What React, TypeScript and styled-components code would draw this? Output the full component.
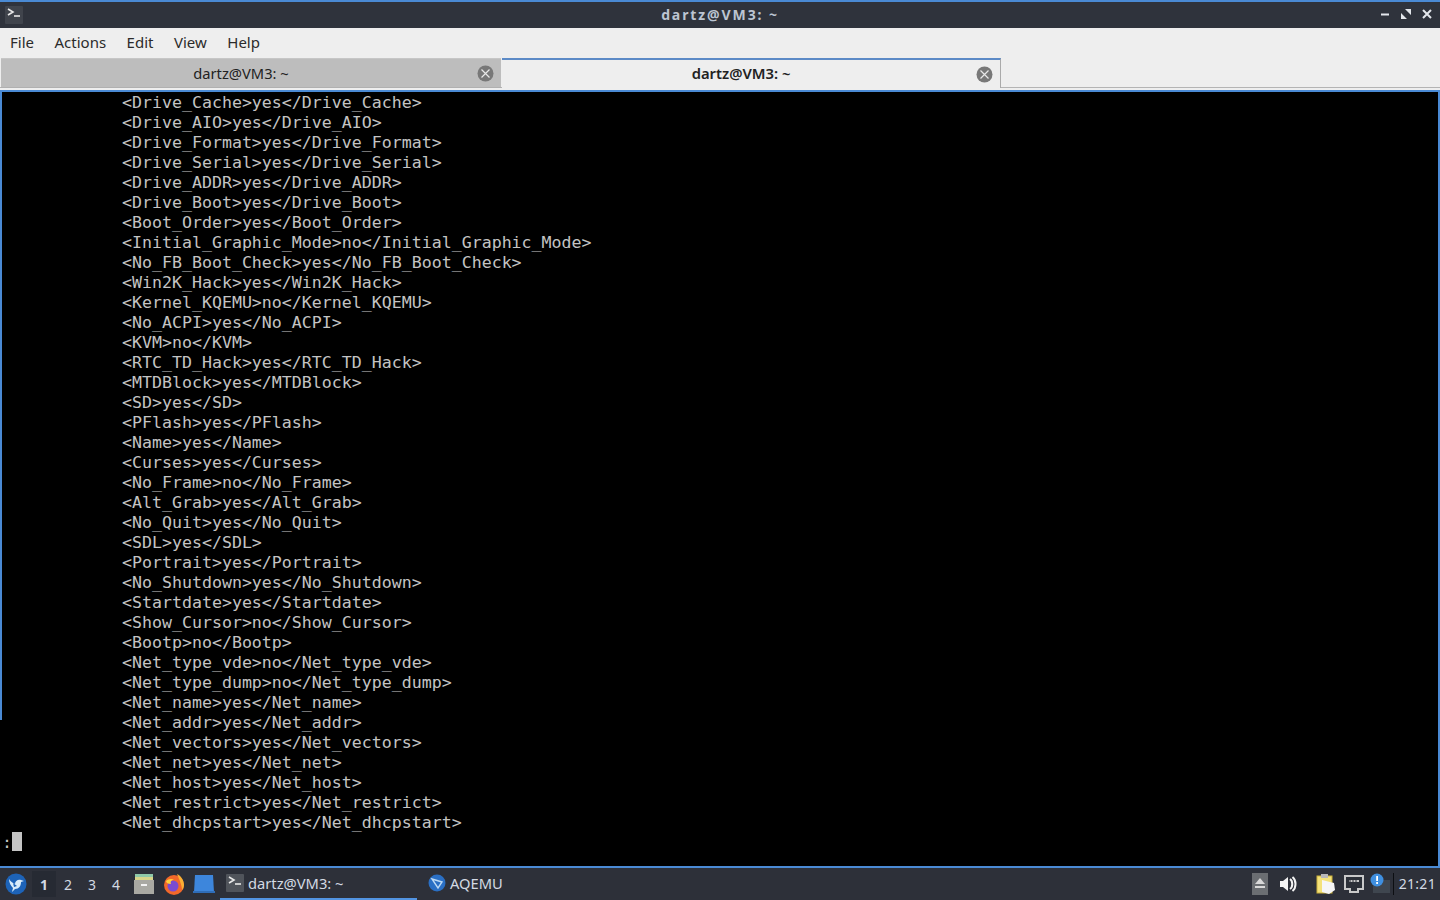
import styled, { createGlobalStyle } from "styled-components";

const lines = [
  "<Drive_Cache>yes</Drive_Cache>",
  "<Drive_AIO>yes</Drive_AIO>",
  "<Drive_Format>yes</Drive_Format>",
  "<Drive_Serial>yes</Drive_Serial>",
  "<Drive_ADDR>yes</Drive_ADDR>",
  "<Drive_Boot>yes</Drive_Boot>",
  "<Boot_Order>yes</Boot_Order>",
  "<Initial_Graphic_Mode>no</Initial_Graphic_Mode>",
  "<No_FB_Boot_Check>yes</No_FB_Boot_Check>",
  "<Win2K_Hack>yes</Win2K_Hack>",
  "<Kernel_KQEMU>no</Kernel_KQEMU>",
  "<No_ACPI>yes</No_ACPI>",
  "<KVM>no</KVM>",
  "<RTC_TD_Hack>yes</RTC_TD_Hack>",
  "<MTDBlock>yes</MTDBlock>",
  "<SD>yes</SD>",
  "<PFlash>yes</PFlash>",
  "<Name>yes</Name>",
  "<Curses>yes</Curses>",
  "<No_Frame>no</No_Frame>",
  "<Alt_Grab>yes</Alt_Grab>",
  "<No_Quit>yes</No_Quit>",
  "<SDL>yes</SDL>",
  "<Portrait>yes</Portrait>",
  "<No_Shutdown>yes</No_Shutdown>",
  "<Startdate>yes</Startdate>",
  "<Show_Cursor>no</Show_Cursor>",
  "<Bootp>no</Bootp>",
  "<Net_type_vde>no</Net_type_vde>",
  "<Net_type_dump>no</Net_type_dump>",
  "<Net_name>yes</Net_name>",
  "<Net_addr>yes</Net_addr>",
  "<Net_vectors>yes</Net_vectors>",
  "<Net_net>yes</Net_net>",
  "<Net_host>yes</Net_host>",
  "<Net_restrict>yes</Net_restrict>",
  "<Net_dhcpstart>yes</Net_dhcpstart>",
];

const GlobalStyle = createGlobalStyle`
  html, body {
    margin: 0;
    padding: 0;
    background: #000;
  }
`;

const Screen = styled.div`
  width: 1440px;
  height: 900px;
  display: flex;
  flex-direction: column;
  overflow: hidden;
  font-family: "Noto Sans", sans-serif;
`;

const TitleBar = styled.div`
  height: 28px;
  box-sizing: border-box;
  flex: none;
  display: flex;
  align-items: center;
  justify-content: space-between;
  padding: 0 5px;
  background: #2f333c;
  border-top: 2px solid #4a8ad4;
  position: relative;
`;

const WindowTitle = styled.div`
  position: absolute;
  left: 0;
  right: 0;
  top: 3px;
  text-align: center;
  color: #bcc5d2;
  font-size: 14px;
  font-weight: 700;
  line-height: 20px;
  letter-spacing: 1.9px;
`;

const WindowButtons = styled.div`
  display: flex;
  gap: 9px;
  margin-top: -2px;
  margin-right: 2px;
`;

const MenuBar = styled.div`
  height: 30px;
  box-sizing: border-box;
  flex: none;
  display: flex;
  align-items: center;
  gap: 20.5px;
  padding: 0 10px 2px;
  background: #eeeeee;
  color: #2b2b2b;
  font-size: 15px;
`;

const TabBar = styled.div`
  height: 32px;
  flex: none;
  background: #eeeeee;
`;

const TabRow = styled.div`
  height: 30px;
  box-sizing: border-box;
  display: flex;
  border-bottom: 1px solid #b4b4b4;
`;

const Tab = styled.div<{ $active?: boolean }>`
  width: ${({ $active }) => ($active ? "499px" : "500px")};
  height: 30px;
  margin-left: 1px;
  box-sizing: border-box;
  position: relative;
  display: flex;
  align-items: center;
  justify-content: center;
  padding-right: 20px;
  padding-bottom: ${({ $active }) => ($active ? "2px" : "0")};
  font-size: ${({ $active }) => ($active ? "14.8px" : "14.7px")};
  font-weight: ${({ $active }) => ($active ? 600 : 400)};
  color: #222222;
  background: ${({ $active }) => ($active ? "#eeeeee" : "#bdbdbd")};
  border-top: ${({ $active }) => ($active ? "2px solid #5c8ac6" : "1px solid #c6c6c6")};
  border-right: ${({ $active }) => ($active ? "1px solid #aaaaaa" : "none")};
  border-bottom: ${({ $active }) => ($active ? "none" : "1px solid #b0b0b0")};
`;

const TabClose = styled.span`
  position: absolute;
  right: 7px;
  top: 6px;
  display: flex;
`;

const Terminal = styled.div`
  height: 776px;
  flex: none;
  position: relative;
  box-sizing: border-box;
  background: #000;
  border-top: 2px solid #4a8ad4;
  padding-top: 1px;
  color: #c4c4c4;
  font-family: "DejaVu Sans Mono", monospace;
  font-size: 16.6px;
  line-height: 20px;
  white-space: pre;

  &::before {
    content: "";
    position: absolute;
    left: 0;
    top: 0;
    width: 2px;
    height: 628px;
    background: #4a8ad4;
  }

  &::after {
    content: "";
    position: absolute;
    right: 0;
    top: 0;
    width: 2px;
    height: 100%;
    background: #4a8ad4;
  }
`;

const TermLine = styled.div`
  height: 20px;
  padding-left: 122px;
`;

const Prompt = styled.div`
  height: 20px;
  padding-left: 2px;
  display: flex;
`;

const Cursor = styled.span`
  display: inline-block;
  width: 10px;
  height: 19px;
  margin-top: -1px;
  background: #c4c4c4;
`;

const Taskbar = styled.div`
  height: 34px;
  flex: none;
  box-sizing: border-box;
  display: flex;
  align-items: center;
  background: #2d3039;
  border-top: 2px solid #4a8ad4;
  color: #d3dae3;
  font-size: 14.7px;
`;

const Launcher = styled.span`
  display: flex;
  margin-left: 5px;
  margin-right: 5px;
`;

const Desk = styled.span<{ $active?: boolean }>`
  width: 24px;
  height: 26px;
  display: flex;
  align-items: center;
  justify-content: center;
  font-size: 14px;
  font-weight: ${({ $active }) => ($active ? 700 : 400)};
  background: ${({ $active }) => ($active ? "#262a33" : "transparent")};
`;

const QuickLaunch = styled.div`
  display: flex;
  align-items: center;
  gap: 8px;
  margin-left: 5px;
  margin-right: 5px;
`;

const TaskButton = styled.div<{ $active?: boolean; $width: number; $pad: number }>`
  width: ${({ $width }) => $width}px;
  height: 32px;
  box-sizing: border-box;
  display: flex;
  align-items: center;
  gap: 4px;
  padding-left: ${({ $pad }) => $pad}px;
  margin-right: 3px;
  border-bottom: 2px solid ${({ $active }) => ($active ? "#5294e2" : "transparent")};
`;

const Tray = styled.div`
  margin-left: auto;
  display: flex;
  align-items: center;
`;

const TrayIcon = styled.span<{ $gap: number }>`
  display: flex;
  margin-right: ${({ $gap }) => $gap}px;
`;

const Clock = styled.span`
  padding-left: 5px;
  padding-right: 4px;
  border-left: 1px solid #0c0e12;
  line-height: 22px;
  font-size: 14px;
  color: #d3dae3;
  letter-spacing: 0.3px;
`;

function TermIcon({ size, bg }: { size: number; bg: string }) {
  return (
    <svg width={size} height={size} viewBox="0 0 18 18">
      <rect width="18" height="18" rx="1" fill={bg} />
      <path d="M3 3l5 3-5 3" fill="none" stroke="#e8e8e8" strokeWidth="1.6" />
      <path d="M9 10h6" stroke="#e8e8e8" strokeWidth="1.6" />
    </svg>
  );
}

function CloseCircle() {
  return (
    <svg width="17" height="17" viewBox="0 0 17 17">
      <circle cx="8.5" cy="8.5" r="8" fill="#787878" />
      <path d="M4.5 4.5l8 8M12.5 4.5l-8 8" stroke="#e8e8e8" strokeWidth="1.2" />
    </svg>
  );
}

function App() {
  return (
    <Screen>
      <GlobalStyle />
      <TitleBar>
        <TermIcon size={18} bg="#40444c" />
        <WindowTitle>dartz@VM3: ~</WindowTitle>
        <WindowButtons>
          <svg width="12" height="12" viewBox="0 0 12 12">
            <path d="M2 6.5h8" stroke="#e4e7ec" strokeWidth="2" />
          </svg>
          <svg width="12" height="12" viewBox="0 0 12 12">
            <path d="M5 1h6v6zM7 11H1V5z" fill="#e4e7ec" />
          </svg>
          <svg width="12" height="12" viewBox="0 0 12 12">
            <path d="M2 2l8 8M10 2l-8 8" stroke="#e4e7ec" strokeWidth="2" />
          </svg>
        </WindowButtons>
      </TitleBar>

      <MenuBar>
        <span>File</span>
        <span>Actions</span>
        <span>Edit</span>
        <span>View</span>
        <span>Help</span>
      </MenuBar>

      <TabBar>
        <TabRow>
          <Tab>
            dartz@VM3: ~
            <TabClose>
              <CloseCircle />
            </TabClose>
          </Tab>
          <Tab $active>
            dartz@VM3: ~
            <TabClose>
              <CloseCircle />
            </TabClose>
          </Tab>
        </TabRow>
      </TabBar>

      <Terminal>
        {lines.map((line) => (
          <TermLine key={line}>{line}</TermLine>
        ))}
        <Prompt>
          :<Cursor />
        </Prompt>
      </Terminal>

      <Taskbar>
        <Launcher>
          <svg width="22" height="22" viewBox="0 0 22 22">
            <circle cx="11" cy="11" r="10.5" fill="#1d63b8" />
            <path d="M4 6c2 3 4 4 6 5 0-3 3-5 6-4l3 1-3 1c0 4-2 7-6 7l-3 3 1-4C6 13 4 10 4 6z" fill="#d9ecfa" />
            <path d="M8 10l4 3-3 1z" fill="#1d63b8" />
          </svg>
        </Launcher>
        <Desk $active>1</Desk>
        <Desk>2</Desk>
        <Desk>3</Desk>
        <Desk>4</Desk>
        <QuickLaunch>
          <svg width="22" height="22" viewBox="0 0 22 22">
            <rect x="2" y="1" width="18" height="3" fill="#8fc9a8" />
            <rect x="2" y="4" width="18" height="3" fill="#d9d58a" />
            <rect x="1" y="7" width="20" height="14" fill="#a9a9a3" />
            <rect x="8" y="11" width="6" height="2" fill="#f2f2f2" />
          </svg>
          <svg width="22" height="24" viewBox="0 0 22 24">
            <circle cx="11" cy="13" r="10" fill="#f2682a" />
            <path d="M14 2c4 2 7 6 7 11 0 2-1 4-2 5 0-4-2-9-5-16z" fill="#fbb034" />
            <circle cx="10" cy="14" r="5.5" fill="#7a4bd0" />
            <path d="M3 9c2-2 6-3 8-1-3 0-4 2-3 4-3 0-5-1-5-3z" fill="#ffcf3a" />
          </svg>
          <svg width="22" height="20" viewBox="0 0 22 20">
            <path d="M2 1h18l1 17H1z" fill="#3d86dc" />
            <rect x="0" y="17" width="22" height="2" fill="#2f6db8" />
          </svg>
        </QuickLaunch>
        <TaskButton $active $width={197} $pad={6}>
          <TermIcon size={18} bg="#50545b" />
          dartz@VM3: ~
        </TaskButton>
        <TaskButton $width={130} $pad={8}>
          <svg width="18" height="18" viewBox="0 0 18 18">
            <circle cx="9" cy="9" r="8.5" fill="#2a6fc4" />
            <path d="M4 5l10 3-4 6z" fill="none" stroke="#bcd9f4" strokeWidth="1.4" />
          </svg>
          AQEMU
        </TaskButton>
        <Tray>
          <TrayIcon $gap={11}>
            <svg width="16" height="22" viewBox="0 0 16 22">
              <rect width="16" height="22" fill="#6b6e72" />
              <path d="M8 5l5 6H3z" fill="#d8d8d8" />
              <rect x="3" y="13" width="10" height="2" fill="#d8d8d8" />
            </svg>
          </TrayIcon>
          <TrayIcon $gap={18}>
            <svg width="18" height="16" viewBox="0 0 18 16">
              <path d="M1 5h3l5-4v14l-5-4H1z" fill="#f4f4f4" />
              <path d="M11 3c3 2 3 8 0 10M13.5 1c4 3 4 11 0 14" fill="none" stroke="#f4f4f4" strokeWidth="2" />
            </svg>
          </TrayIcon>
          <TrayIcon $gap={7}>
            <svg width="22" height="22" viewBox="0 0 22 22">
              <rect x="2" y="3" width="15" height="17" fill="#f4e27a" stroke="#cdb23c" />
              <rect x="6" y="1" width="7" height="4" fill="#b8b8b8" />
              <path d="M7 7l12 3 1 7-6 4-7-2z" fill="#f6f6f6" />
            </svg>
          </TrayIcon>
          <TrayIcon $gap={6}>
            <svg width="20" height="18" viewBox="0 0 20 18">
              <path d="M1 1h18v13h-5v3H6v-3H1z" fill="#2c3038" stroke="#c9c9c9" strokeWidth="2" />
              <path d="M5 5h10v2H5z" fill="#c9c9c9" />
              <path d="M6 4v3M9 4v3M12 4v3" stroke="#2c3038" />
            </svg>
          </TrayIcon>
          <TrayIcon $gap={3}>
            <svg width="20" height="22" viewBox="0 0 20 22">
              <rect x="3" y="7" width="17" height="13" fill="#3f464f" />
              <circle cx="7" cy="7" r="6.5" fill="#3f8fe0" />
              <rect x="6.2" y="3" width="1.8" height="5" fill="#fff" />
              <rect x="6.2" y="9" width="1.8" height="2" fill="#fff" />
            </svg>
          </TrayIcon>
          <Clock>21:21</Clock>
        </Tray>
      </Taskbar>
    </Screen>
  );
}

export default App;
